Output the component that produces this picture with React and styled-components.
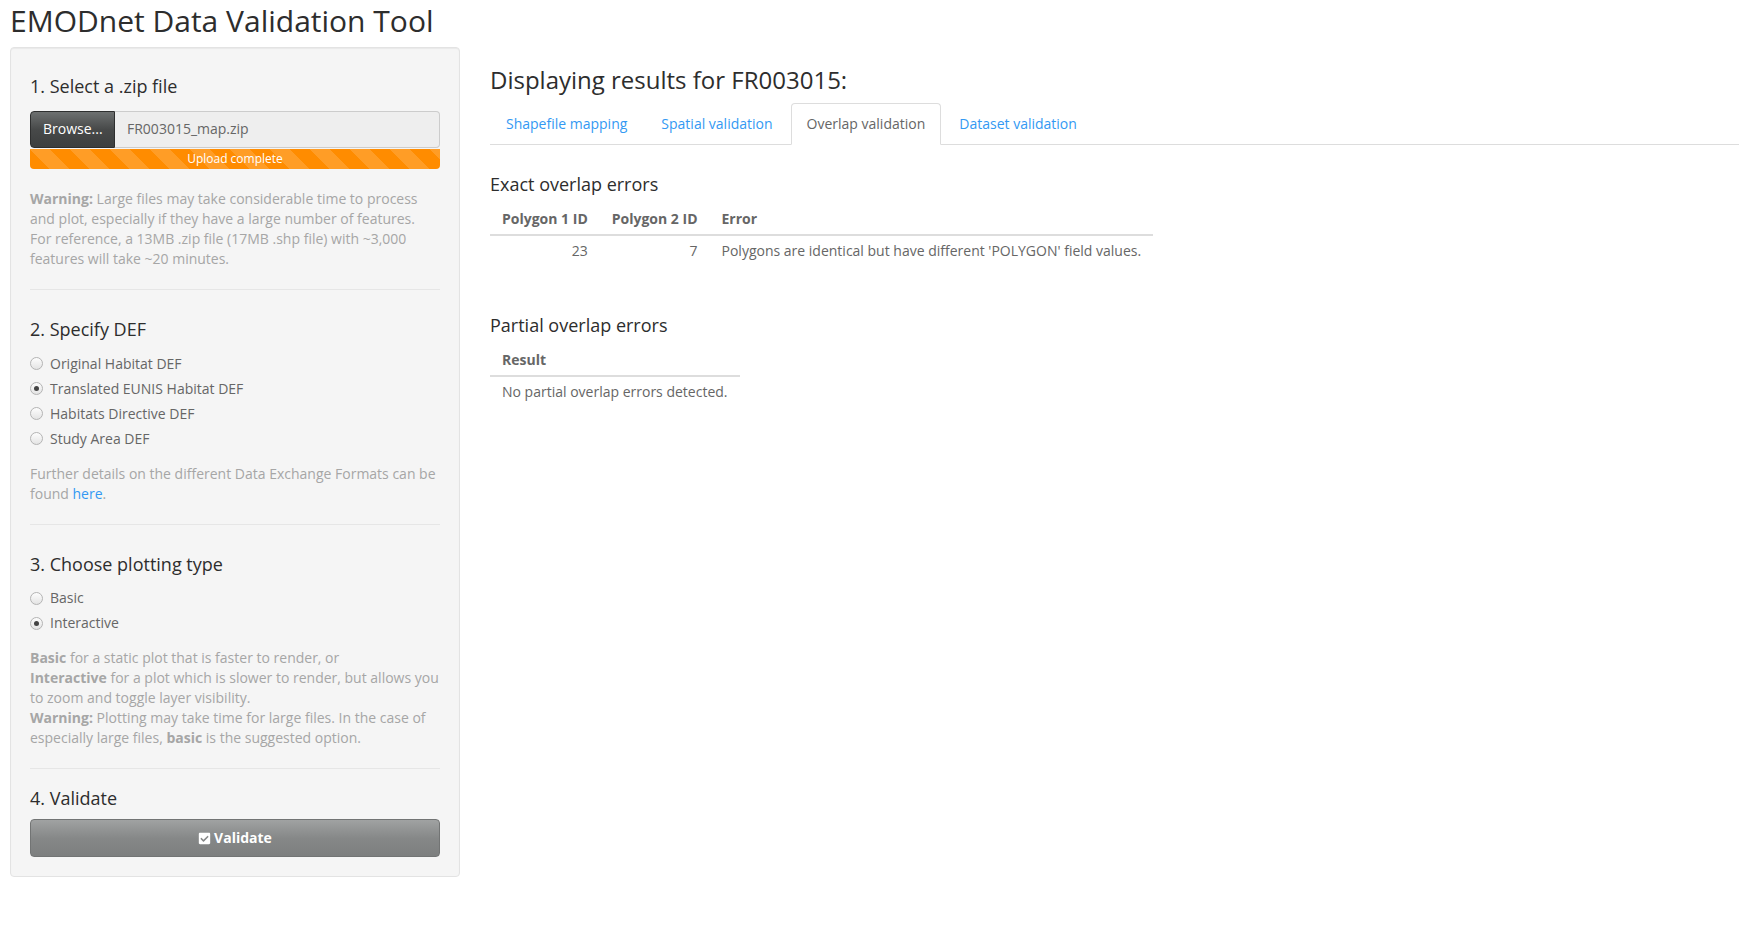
import React from "react";
import styled, { createGlobalStyle } from "styled-components";
import { FaCheckSquare } from "react-icons/fa";

const GlobalStyle = createGlobalStyle`
    body {
        margin: 0;
        background: #ffffff;
        font-family: "Open Sans", "Liberation Sans", Arial, sans-serif;
        font-size: 14px;
        line-height: 20px;
        color: #666666;
    }
    * {
        box-sizing: border-box;
    }
`;

const defOptions = [
    { label: "Original Habitat DEF", checked: false },
    { label: "Translated EUNIS Habitat DEF", checked: true },
    { label: "Habitats Directive DEF", checked: false },
    { label: "Study Area DEF", checked: false },
];

const plotOptions = [
    { label: "Basic", checked: false },
    { label: "Interactive", checked: true },
];

const tabs = ["Shapefile mapping", "Spatial validation", "Overlap validation", "Dataset validation"];

const exactErrors = [
    { id1: 23, id2: 7, error: "Polygons are identical but have different 'POLYGON' field values." },
];

const RadioGroup = ({ options }) => (
    <RadioList>
        {options.map((opt) => (
            <RadioRow key={opt.label}>
                <RadioDot $checked={opt.checked} />
                {opt.label}
            </RadioRow>
        ))}
    </RadioList>
);

const App = () => {
    return (
        <Page>
            <GlobalStyle />
            <Title>EMODnet Data Validation Tool</Title>
            <Layout>
                <Well>
                    <Heading>1. Select a .zip file</Heading>
                    <FileInput>
                        <BrowseButton>Browse...</BrowseButton>
                        <FileName>FR003015_map.zip</FileName>
                    </FileInput>
                    <Progress>Upload complete</Progress>
                    <HelpText $narrow>
                        <b>Warning:</b> Large files may take considerable time to process and plot, especially if they
                        have a large number of features. For reference, a 13MB .zip file (17MB .shp file) with ~3,000
                        features will take ~20 minutes.
                    </HelpText>
                    <Rule />

                    <Heading>2. Specify DEF</Heading>
                    <RadioGroup options={defOptions} />
                    <HelpText>
                        Further details on the different Data Exchange Formats can be found <HelpLink href="#">here</HelpLink>.
                    </HelpText>
                    <Rule />

                    <Heading>3. Choose plotting type</Heading>
                    <RadioGroup options={plotOptions} />
                    <HelpText>
                        <b>Basic</b> for a static plot that is faster to render, or<br />
                        <b>Interactive</b> for a plot which is slower to render, but allows you to zoom and toggle layer
                        visibility.<br />
                        <b>Warning:</b> Plotting may take time for large files. In the case of especially large files,{" "}
                        <b>basic</b> is the suggested option.
                    </HelpText>
                    <Rule />

                    <Heading $flush>4. Validate</Heading>
                    <ValidateButton>
                        <FaCheckSquare size={13} />
                        Validate
                    </ValidateButton>
                </Well>

                <Main>
                    <ResultsTitle>Displaying results for FR003015:</ResultsTitle>
                    <Tabs>
                        {tabs.map((t) => (
                            <Tab key={t} $active={t === "Overlap validation"}>{t}</Tab>
                        ))}
                    </Tabs>
                    <TabContent>
                        <Section>
                            <Heading>Exact overlap errors</Heading>
                            <Table>
                                <thead>
                                    <tr>
                                        <Th>Polygon 1 ID</Th>
                                        <Th>Polygon 2 ID</Th>
                                        <Th>Error</Th>
                                    </tr>
                                </thead>
                                <tbody>
                                    {exactErrors.map((row, i) => (
                                        <tr key={i}>
                                            <Td $right>{row.id1}</Td>
                                            <Td $right>{row.id2}</Td>
                                            <Td>{row.error}</Td>
                                        </tr>
                                    ))}
                                </tbody>
                            </Table>
                        </Section>
                        <Section>
                            <Heading>Partial overlap errors</Heading>
                            <Table>
                                <thead>
                                    <tr>
                                        <Th>Result</Th>
                                    </tr>
                                </thead>
                                <tbody>
                                    <tr>
                                        <Td>No partial overlap errors detected.</Td>
                                    </tr>
                                </tbody>
                            </Table>
                        </Section>
                    </TabContent>
                </Main>
            </Layout>
        </Page>
    );
};

const Page = styled.div`
    padding: 0 11px 0 10px;
`;

const Title = styled.h2`
    margin: 4px 0 10px 0;
    font-size: 30px;
    line-height: 33px;
    font-weight: 400;
    color: #2d2d2d;
`;

const Layout = styled.div`
    display: grid;
    grid-template-columns: 450px 1fr;
    column-gap: 30px;
    align-items: start;
`;

const Well = styled.div`
    display: flex;
    flex-direction: column;
    background: #f5f5f5;
    border: 1px solid #e3e3e3;
    border-radius: 4px;
    box-shadow: inset 0 1px 1px rgba(0, 0, 0, 0.05);
    padding: 19px;
`;

const Heading = styled.h4`
    margin: ${(p) => (p.$flush ? "0" : "10px")} 0 10px 0;
    font-size: 18px;
    line-height: 19.8px;
    font-weight: 400;
    color: #2d2d2d;
`;

const FileInput = styled.div`
    display: flex;
    height: 37px;
    margin-top: 4px;
`;

const BrowseButton = styled.div`
    display: flex;
    align-items: center;
    padding: 0 12px;
    width: 85px;
    color: #ffffff;
    font-size: 14px;
    background: linear-gradient(#6d7070, #474949 50%, #3d3f3f);
    border: 1px solid #2e2f2f;
    border-radius: 4px 0 0 4px;
`;

const FileName = styled.div`
    flex: 1;
    display: flex;
    align-items: center;
    padding: 0 12px;
    background: #eeeeee;
    border: 1px solid #cccccc;
    border-left: none;
    border-radius: 0 4px 4px 0;
    color: #666666;
`;

const Progress = styled.div`
    height: 20px;
    margin-top: 1px;
    border-radius: 0 0 4px 4px;
    background-color: #ff8c00;
    background-image: linear-gradient(
        45deg,
        rgba(255, 255, 255, 0.15) 25%,
        transparent 25%,
        transparent 50%,
        rgba(255, 255, 255, 0.15) 50%,
        rgba(255, 255, 255, 0.15) 75%,
        transparent 75%,
        transparent
    );
    background-size: 40px 40px;
    color: #ffffff;
    font-size: 12px;
    line-height: 20px;
    text-align: center;
`;

const HelpText = styled.p`
    margin: 20px 0 0 0;
    max-width: ${(p) => (p.$narrow ? "400px" : "none")};
    color: #a6a6a6;
    font-size: 14px;
    line-height: 20px;

    b {
        font-weight: 700;
    }
`;

const HelpLink = styled.a`
    color: #3399f3;
    text-decoration: none;
`;

const Rule = styled.hr`
    width: 100%;
    margin: 20px 0;
    border: 0;
    border-top: 1px solid #e6e6e6;
`;

const RadioList = styled.div`
    display: flex;
    flex-direction: column;
    gap: 5px;
    margin-top: 4px;

    & + p {
        margin-top: 15px;
    }
`;

const RadioRow = styled.label`
    display: flex;
    align-items: center;
    gap: 7px;
    height: 20px;
    color: #666666;
`;

const RadioDot = styled.span`
    position: relative;
    width: 13px;
    height: 13px;
    border-radius: 50%;
    border: 1px solid #b4b4b4;
    background: linear-gradient(#fdfdfd, #e4e4e4);

    &::after {
        content: "";
        display: ${(p) => (p.$checked ? "block" : "none")};
        position: absolute;
        top: 3px;
        left: 3px;
        width: 5px;
        height: 5px;
        border-radius: 50%;
        background: #444444;
    }
`;

const ValidateButton = styled.div`
    display: flex;
    align-items: center;
    justify-content: center;
    gap: 3px;
    height: 38px;
    color: #ffffff;
    font-weight: 700;
    font-size: 14px;
    background: linear-gradient(#a0a2a2, #868888 50%, #7d7f7f);
    border: 1px solid #727474;
    border-radius: 4px;
`;

const Main = styled.div`
    min-width: 0;
`;

const ResultsTitle = styled.h3`
    margin: 20px 0 10px 0;
    font-size: 24px;
    line-height: 26.4px;
    font-weight: 400;
    color: #2d2d2d;
`;

const Tabs = styled.ul`
    display: flex;
    list-style: none;
    margin: 0;
    padding: 0;
    border-bottom: 1px solid #dddddd;
`;

const Tab = styled.li`
    margin: 0 2px -1px 0;
    padding: 10px 15px;
    line-height: 20px;
    border: 1px solid ${(p) => (p.$active ? "#dddddd" : "transparent")};
    border-bottom-color: ${(p) => (p.$active ? "#ffffff" : "transparent")};
    border-radius: 4px 4px 0 0;
    background: ${(p) => (p.$active ? "#ffffff" : "transparent")};
    color: ${(p) => (p.$active ? "#666666" : "#3399f3")};
`;

const TabContent = styled.div`
    display: flex;
    flex-direction: column;
    align-items: flex-start;
    gap: 20px;
    padding-top: 20px;
`;

const Section = styled.div`
    h4 {
        margin-bottom: 9px;
    }
`;

const Table = styled.table`
    border-collapse: collapse;
    margin-bottom: 20px;
`;

const Th = styled.th`
    padding: 5px 12px;
    text-align: left;
    font-weight: 700;
    color: #666666;
    border-bottom: 2px solid #dddddd;
    white-space: nowrap;
`;

const Td = styled.td`
    padding: 5px 12px;
    text-align: ${(p) => (p.$right ? "right" : "left")};
    color: #666666;
    white-space: nowrap;
`;

export default App;
